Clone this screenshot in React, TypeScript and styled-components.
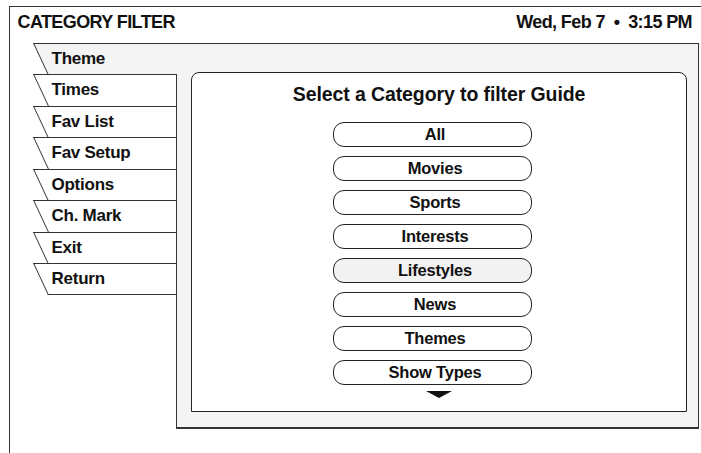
import React from "react";
import styled, { createGlobalStyle } from "styled-components";

const LINE = "#333";

const GlobalStyle = createGlobalStyle`
  html, body {
    margin: 0;
    padding: 0;
    background: #fff;
    overflow: hidden;
  }
  body {
    font-family: "Liberation Sans", Arial, Helvetica, sans-serif;
    color: #111;
  }
`;

const Frame = styled.div`
  margin: 6px 0 0 9px;
  height: calc(100vh - 6px);
  box-sizing: border-box;
  border-top: 1.5px solid ${LINE};
  border-left: 1.5px solid ${LINE};
  display: flex;
  flex-direction: column;
`;

const Header = styled.header`
  height: 35.5px;
  box-sizing: border-box;
  display: flex;
  justify-content: space-between;
  align-items: flex-start;
  padding: 4.5px 9px 0 7.5px;
  font-size: 18px;
  font-weight: bold;
  line-height: 20px;
  letter-spacing: -0.6px;
`;

const Clock = styled.span`
  white-space: pre;
`;

const Body = styled.div`
  display: flex;
  align-items: flex-start;
  padding-left: 22.5px;
`;

const TabList = styled.nav`
  width: 144.5px;
  margin-right: -1.5px;
  position: relative;
  z-index: 1;
  display: flex;
  flex-direction: column;
`;

const Tab = styled.div<{ $active?: boolean; $last?: boolean }>`
  position: relative;
  z-index: 0;
  height: 31.5px;
  padding-left: 19px;
  font-size: 17px;
  font-weight: bold;
  line-height: 31.5px;
  letter-spacing: -0.25px;
  cursor: pointer;

  &::before,
  &::after {
    content: "";
    position: absolute;
    top: 0;
    bottom: 0;
    z-index: -1;
    box-sizing: border-box;
    background: ${(p) => (p.$active ? "#f4f4f4" : "#fff")};
    border-top: 1.5px solid ${LINE};
    border-bottom: ${(p) => (p.$last ? `1.5px solid ${LINE}` : "none")};
  }

  &::before {
    left: 0;
    width: 60px;
    border-left: 1.5px solid ${LINE};
    transform: skewX(25deg);
    transform-origin: top left;
  }

  &::after {
    left: 20px;
    right: 0;
    border-right: ${(p) => (p.$active ? "none" : `1.5px solid ${LINE}`)};
  }
`;

const Panel = styled.section`
  width: 523px;
  height: 386px;
  box-sizing: border-box;
  background: #f4f4f4;
  border: 1.5px solid ${LINE};
  border-bottom-width: 2px;
  padding: 28.5px 10.5px 15px 14.5px;
  display: flex;
`;

const Screen = styled.div`
  flex: 1;
  background: #fff;
  border: 1.5px solid #222;
  border-radius: 8px 8px 0 0;
  display: flex;
  flex-direction: column;
  align-items: center;
  padding-top: 8.5px;
`;

const Title = styled.h2`
  margin: 0 0 16px;
  font-size: 19.5px;
  font-weight: bold;
  line-height: 24px;
  letter-spacing: -0.1px;
`;

const CategoryList = styled.div`
  display: flex;
  flex-direction: column;
  gap: 9px;
  margin-right: 14px;
`;

const Category = styled.button<{ $selected?: boolean }>`
  width: 199px;
  height: 25px;
  box-sizing: border-box;
  border: 1.5px solid #222;
  border-radius: 11px;
  background: ${(p) => (p.$selected ? "#f2f2f2" : "#fff")};
  padding: 0 0 0 6px;
  font-family: inherit;
  font-size: 16.5px;
  font-weight: bold;
  line-height: 22px;
  letter-spacing: -0.2px;
  color: #111;
  text-align: center;
  cursor: pointer;
`;

const MoreArrow = styled.div`
  margin-top: 6px;
  width: 0;
  height: 0;
  border-left: 13.5px solid transparent;
  border-right: 13.5px solid transparent;
  border-top: 7px solid #111;
`;

const tabs = ["Theme", "Times", "Fav List", "Fav Setup", "Options", "Ch. Mark", "Exit", "Return"];
const categories = ["All", "Movies", "Sports", "Interests", "Lifestyles", "News", "Themes", "Show Types"];

const App = () => {
  return (
    <>
      <GlobalStyle />
      <Frame>
        <Header>
          <span>CATEGORY FILTER</span>
          <Clock>{"Wed, Feb 7  \u2022  3:15 PM"}</Clock>
        </Header>
        <Body>
          <TabList>
            {tabs.map((t, i) => (
              <Tab key={t} $active={i === 0} $last={i === tabs.length - 1}>
                {t}
              </Tab>
            ))}
          </TabList>
          <Panel>
            <Screen>
              <Title>Select a Category to filter Guide</Title>
              <CategoryList>
                {categories.map((c) => (
                  <Category key={c} $selected={c === "Lifestyles"}>
                    {c}
                  </Category>
                ))}
              </CategoryList>
              <MoreArrow />
            </Screen>
          </Panel>
        </Body>
      </Frame>
    </>
  );
};

export default App;
